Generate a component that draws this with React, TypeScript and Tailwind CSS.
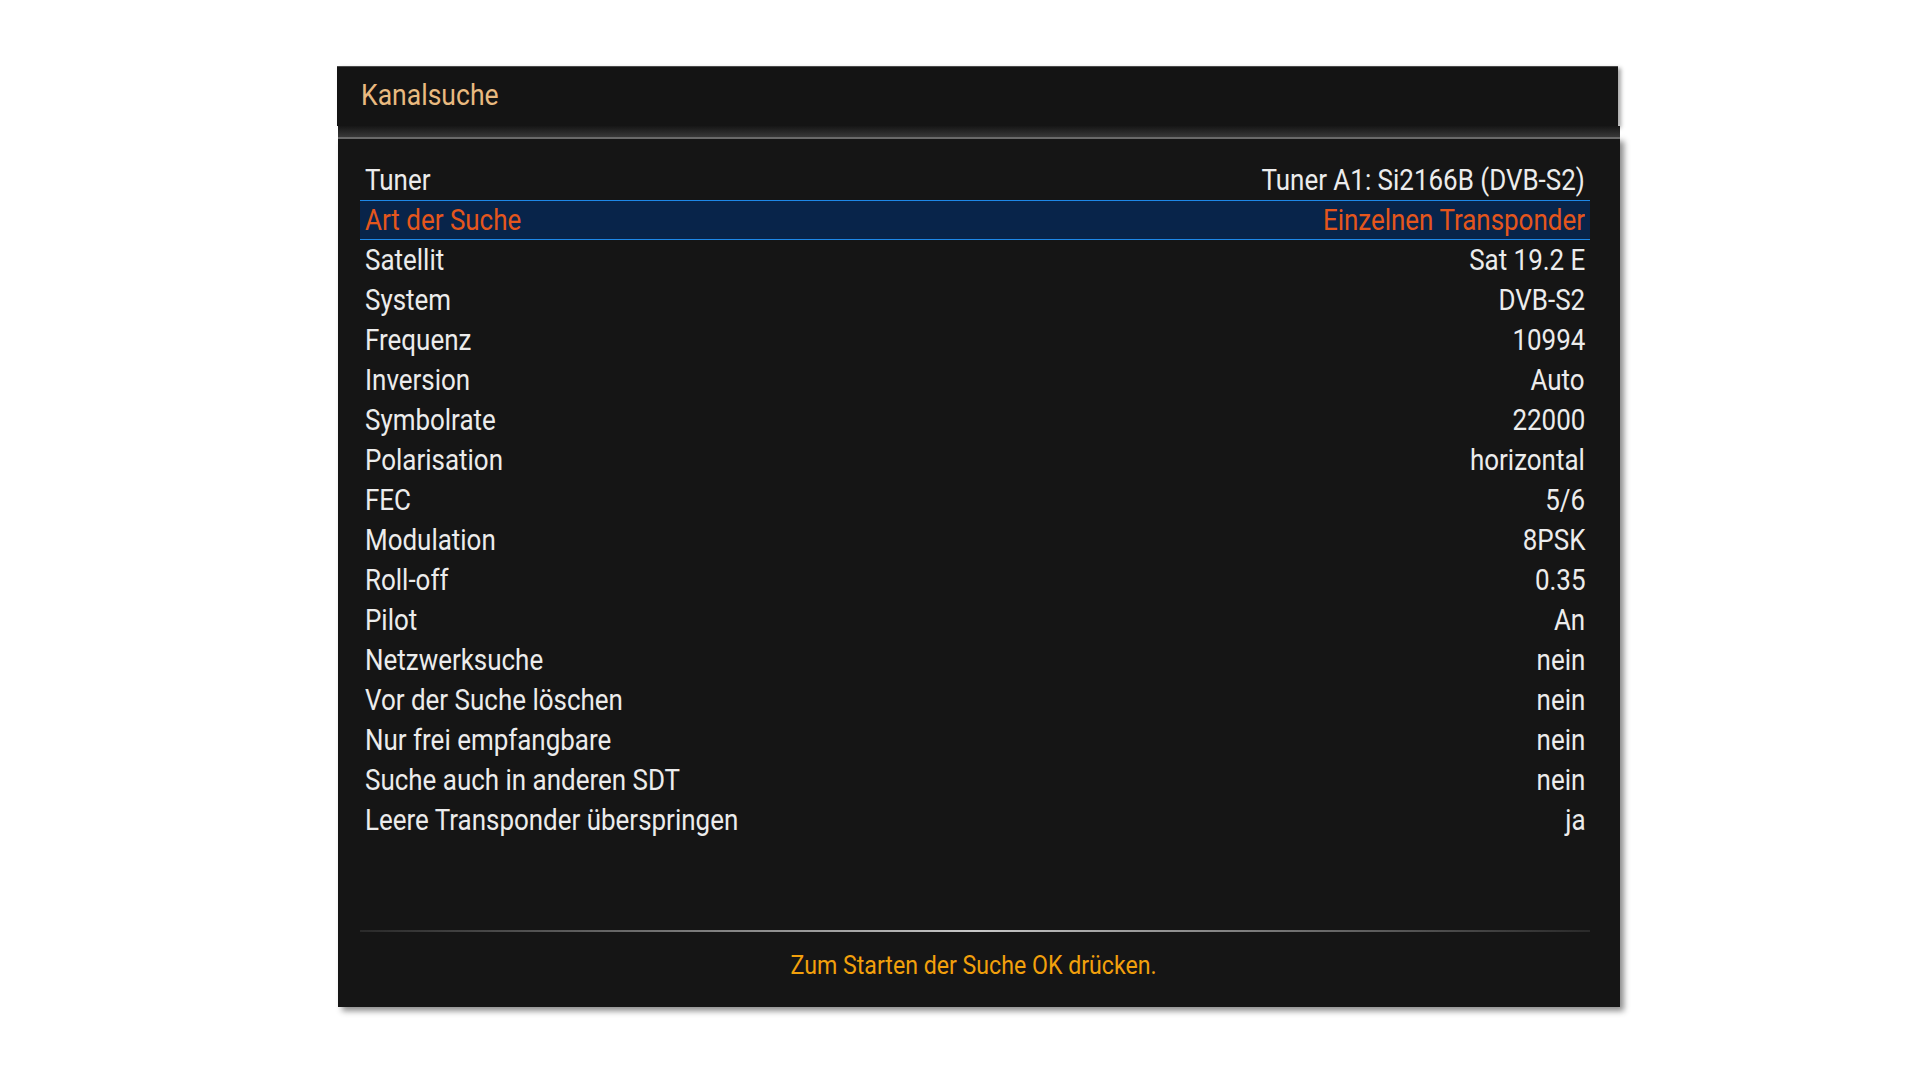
import React from "react";

const rows: [string, string][] = [
  ["Tuner", "Tuner A1: Si2166B (DVB-S2)"],
  ["Art der Suche", "Einzelnen Transponder"],
  ["Satellit", "Sat 19.2 E"],
  ["System", "DVB-S2"],
  ["Frequenz", "10994"],
  ["Inversion", "Auto"],
  ["Symbolrate", "22000"],
  ["Polarisation", "horizontal"],
  ["FEC", "5/6"],
  ["Modulation", "8PSK"],
  ["Roll-off", "0.35"],
  ["Pilot", "An"],
  ["Netzwerksuche", "nein"],
  ["Vor der Suche löschen", "nein"],
  ["Nur frei empfangbare", "nein"],
  ["Suche auch in anderen SDT", "nein"],
  ["Leere Transponder überspringen", "ja"],
];

export default function App() {
  return (
    <div
      className="w-[1920px] h-[1080px] bg-white overflow-hidden"
      style={{ fontFamily: "Roboto, 'Liberation Sans', sans-serif" }}
    >
      <div className="ml-[337px] pt-[66px] w-[1283px]">
        <div className="h-[60px] bg-[#141414] border-t border-[#4a4a4a] shadow-[3px_2px_4px_rgba(0,0,0,0.35)] flex items-center pl-[24px] pb-[4px] mr-[2px]">
          <span className="text-[30px] text-[#e9ba80] leading-none scale-x-[0.885] origin-left">Kanalsuche</span>
        </div>
        <div className="ml-[1px] h-[11px] bg-gradient-to-b from-[#161616] to-[#3a3a3a]" />
        <div className="ml-[1px] h-[870px] bg-[#151515] border-t-2 border-[#6a6a6a] shadow-[4px_4px_6px_rgba(0,0,0,0.45)] flex flex-col">
          <div className="ml-[22px] mr-[30px] mt-[21px] flex flex-col">
            {rows.map(([k, v], i) => {
              const sel = i === 1;
              return (
                <div
                  key={k}
                  className={
                    sel
                      ? "h-[40px] flex items-center justify-between px-[5px] bg-[#08244a] border-y border-[#1e88e8] text-[#e5561c]"
                      : "h-[40px] flex items-center justify-between px-[5px] text-[#ececec]"
                  }
                >
                  <span className="text-[30px] leading-none scale-x-[0.865] origin-left whitespace-nowrap">{k}</span>
                  <span className="text-[30px] leading-none scale-x-[0.865] origin-right whitespace-nowrap">{v}</span>
                </div>
              );
            })}
          </div>
          <div className="ml-[22px] mr-[30px] mt-[90px] h-[2px] bg-gradient-to-r from-[#2a2a2a] via-[#c8c8c8] to-[#2a2a2a]" />
          <div className="flex justify-center mt-[20px] mr-[10px]">
            <span className="text-[26px] leading-none text-[#f2a00c] scale-x-[0.89] whitespace-nowrap">
              Zum Starten der Suche OK drücken.
            </span>
          </div>
        </div>
      </div>
    </div>
  );
}
